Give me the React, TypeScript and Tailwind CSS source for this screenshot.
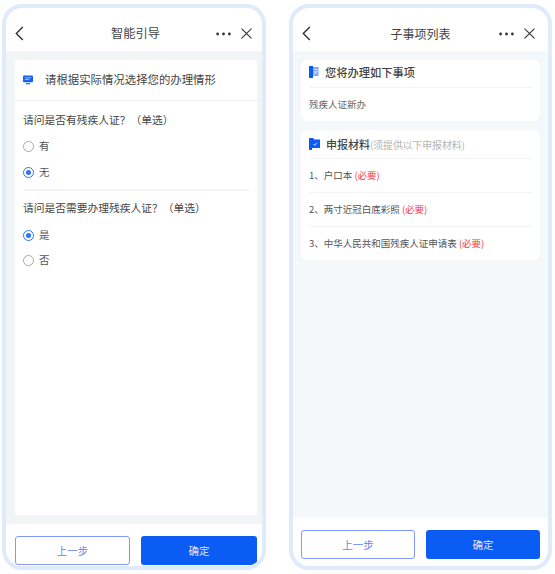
const font = { fontFamily: '"Noto Sans CJK SC", "Liberation Sans", sans-serif' };

function Back() {
  return (
    <svg viewBox="0 0 9 15" className="h-[15px] w-[9px]" fill="none" stroke="#333" strokeWidth="1.4">
      <path d="M7.8 1 L1.3 7.5 L7.8 14" />
    </svg>
  );
}

function Dots() {
  return (
    <svg viewBox="0 0 15 4" className="h-[4px] w-[15px]" fill="#333">
      <circle cx="1.6" cy="2" r="1.4" />
      <circle cx="7.5" cy="2" r="1.4" />
      <circle cx="13.4" cy="2" r="1.4" />
    </svg>
  );
}

function Close() {
  return (
    <svg viewBox="0 0 12 12" className="h-[11px] w-[11px]" fill="none" stroke="#333" strokeWidth="1.2">
      <path d="M0.6 0.6 L11.4 11.4 M11.4 0.6 L0.6 11.4" />
    </svg>
  );
}

function Radio({ label, on }: { label: string; on?: boolean }) {
  return (
    <div className="flex h-[26px] items-center gap-[5px] pl-[8px] text-[10.5px] text-[#555]">
      {on ? (
        <span className="flex h-[11px] w-[11px] items-center justify-center rounded-full border border-[#2f73f6]">
          <span className="h-[5px] w-[5px] rounded-full bg-[#2f73f6]" />
        </span>
      ) : (
        <span className="h-[11px] w-[11px] rounded-full border border-[#aaa]" />
      )}
      <span>{label}</span>
    </div>
  );
}

function Question({ title }: { title: string }) {
  return <div className="pl-[8px] text-[10.75px] leading-[20px] text-[#444]">{title}</div>;
}

function Flag({ check }: { check?: boolean }) {
  return (
    <svg viewBox="0 0 11 12" className="h-[12px] w-[11px] shrink-0">
      {check ? (
        <>
          <path d="M0 0 H4 L5.5 1.5 H11 V10 H3 V12 H0 Z" fill="#0b5bf5" />
          <path d="M4.5 6 L5.8 7.3 L7.8 4.8" fill="none" stroke="#fff" strokeWidth="0.8" />
        </>
      ) : (
        <>
          <path d="M0 0 H4 V12 H0 Z" fill="#0b5bf5" />
          <path d="M4 1 H9.5 V10 H4 Z" fill="#7fa8f5" />
          <path d="M5 3.5 H8.5 M5 6 H8 M4.5 9 L8.5 5" stroke="#fff" strokeWidth="0.7" />
        </>
      )}
    </svg>
  );
}

function Req() {
  return <span className="text-[#f5333f]"> (必要)</span>;
}

function Footer({ pb, first }: { pb: string; first: string }) {
  return (
    <div className={`flex gap-[11px] bg-white pt-[12px] ${pb}`}>
      <div className={`flex h-[29px] shrink-0 items-center justify-center rounded-[3px] border border-[#8398fa] bg-white text-[10.5px] text-[#6484f2] ${first}`}>
        上一步
      </div>
      <div className="flex h-[29px] flex-1 items-center justify-center rounded-[3px] bg-[#0b5bf5] text-[10.5px] text-[#dfe8fd]">
        确定
      </div>
    </div>
  );
}

export default function App() {
  return (
    <div className="flex h-[574px] w-[555px] bg-white pt-[4px] pl-[2px]" style={font}>
      <div className="flex h-[566px] w-[264px] flex-col overflow-hidden rounded-[20px] border-[4px] border-[#dfeafb] bg-white">
        <div className="flex h-[43px] shrink-0 items-center pt-[8px] pl-[9px] pr-[10px]">
          <div className="flex flex-1">
            <Back />
          </div>
          <div className="pl-[4px] text-center text-[12.25px] text-[#444]">智能引导</div>
          <div className="flex flex-1 items-center justify-end gap-[10px]">
            <Dots />
            <Close />
          </div>
        </div>
        <div className="flex flex-1 flex-col bg-[#f1f5f6] pt-[9px] pr-[5px] pb-[9px] pl-[9px]">
          <div className="flex flex-1 flex-col bg-white">
            <div className="flex h-[41px] items-center gap-[12px] border-b border-[#eeeeee] pl-[8px]">
              <svg viewBox="0 0 11 10" className="h-[10px] w-[10px]">
                <rect x="0" y="0" width="11" height="7.5" rx="1" fill="#1560f0" />
                <path d="M2 2.5 H9 M2 4.5 H7" stroke="#cfe0ff" strokeWidth="0.8" />
                <rect x="3" y="8.5" width="5" height="1.2" fill="#1560f0" />
              </svg>
              <span className="text-[11.4px] text-[#444]">请根据实际情况选择您的办理情形</span>
            </div>
            <div className="pt-[9px]">
              <Question title="请问是否有残疾人证？（单选）" />
              <div className="pt-[3px]">
                <Radio label="有" />
                <Radio label="无" on />
              </div>
              <div className="mx-[8px] mt-[4px] mb-[2px] h-[2px] bg-[#f4f4f4]" />
              <div className="pt-[5px]">
                <Question title="请问是否需要办理残疾人证？（单选）" />
              </div>
              <div className="pt-[4px]">
                <Radio label="是" on />
                <div className="-mt-[1px]">
                  <Radio label="否" />
                </div>
              </div>
            </div>
          </div>
        </div>
        <div className="pr-[5px] pl-[9px]">
          <Footer pb="pb-[1px]" first="w-[115px]" />
        </div>
      </div>

      <div className="ml-[23px] flex h-[566px] w-[263px] flex-col overflow-hidden rounded-[20px] border-[4px] border-[#dfeafb] bg-white">
        <div className="flex h-[43px] shrink-0 items-center pt-[8px] pl-[9px] pr-[13px]">
          <div className="flex flex-1">
            <Back />
          </div>
          <div className="pl-[4px] text-center text-[12px] text-[#444]">子事项列表</div>
          <div className="flex flex-1 items-center justify-end gap-[10px]">
            <Dots />
            <Close />
          </div>
        </div>
        <div className="flex flex-1 flex-col gap-[9px] bg-[#f5f8fb] px-[8px] pt-[9px]">
          <div className="rounded-[7px] bg-white px-[8px]">
            <div className="flex h-[28px] items-center gap-[5px] border-b border-[#f3f3f3] pb-[3px]">
              <Flag />
              <span className="text-[11.25px] font-medium text-[#444]">您将办理如下事项</span>
            </div>
            <div className="flex h-[33px] items-center text-[9.5px] text-[#666]">残疾人证新办</div>
          </div>
          <div className="rounded-[7px] bg-white px-[8px]">
            <div className="flex h-[29px] items-center gap-[6px] border-b border-[#f3f3f3]">
              <Flag check />
              <span className="text-[11px] font-medium text-[#444]">
                申报材料<span className="text-[9.8px] font-normal text-[#b5b5b5]">(须提供以下申报材料)</span>
              </span>
            </div>
            <div className="flex h-[34px] items-center border-b border-[#f3f3f3] text-[9.5px] text-[#555]">
              <span>1、户口本<Req /></span>
            </div>
            <div className="flex h-[34px] items-center border-b border-[#f3f3f3] text-[9.5px] text-[#555]">
              <span>2、两寸近冠白底彩照<Req /></span>
            </div>
            <div className="flex h-[33px] items-center text-[9.5px] text-[#555]">
              <span>3、中华人民共和国残疾人证申请表<Req /></span>
            </div>
          </div>
        </div>
        <div className="px-[8px]">
          <Footer pb="pb-[7px]" first="w-[114px]" />
        </div>
      </div>
    </div>
  );
}
